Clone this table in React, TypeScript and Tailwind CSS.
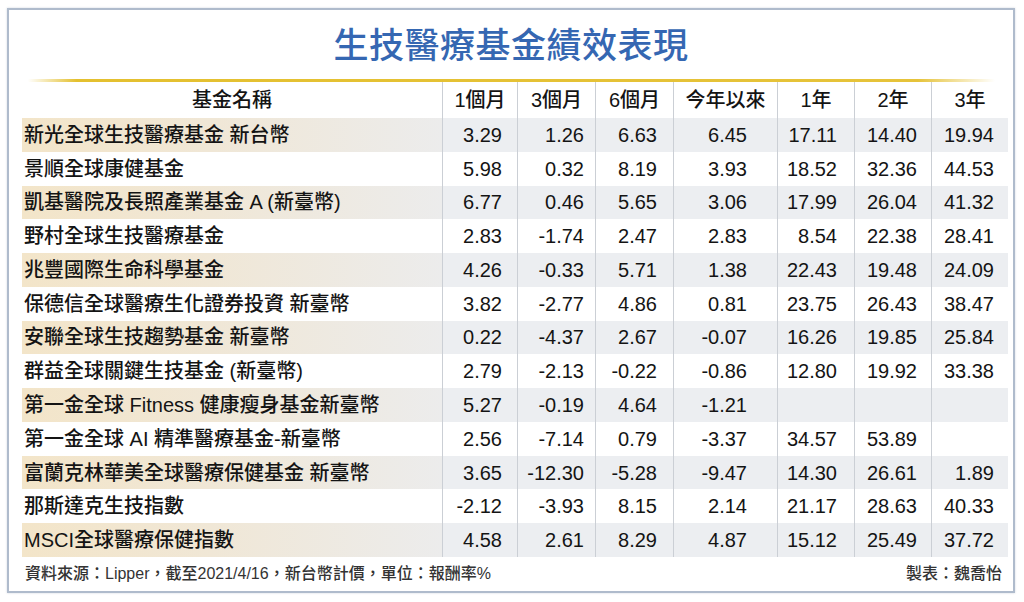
import React from "react";

const cols = [
  { h: "1個月", w: "w-[75px]", pr: "pr-[15px]" },
  { h: "3個月", w: "w-[78px]", pr: "pr-[11px]" },
  { h: "6個月", w: "w-[78px]", pr: "pr-[16px]" },
  { h: "今年以來", w: "w-[104px]", pr: "pr-[30px]" },
  { h: "1年", w: "w-[77px]", pr: "pr-[17px]" },
  { h: "2年", w: "w-[77px]", pr: "pr-[14px]" },
  { h: "3年", w: "w-[77px]", pr: "pr-[14px]" },
];

const rows: string[][] = [
  ["新光全球生技醫療基金 新台幣", "3.29", "1.26", "6.63", "6.45", "17.11", "14.40", "19.94"],
  ["景順全球康健基金", "5.98", "0.32", "8.19", "3.93", "18.52", "32.36", "44.53"],
  ["凱基醫院及長照產業基金 A (新臺幣)", "6.77", "0.46", "5.65", "3.06", "17.99", "26.04", "41.32"],
  ["野村全球生技醫療基金", "2.83", "-1.74", "2.47", "2.83", "8.54", "22.38", "28.41"],
  ["兆豐國際生命科學基金", "4.26", "-0.33", "5.71", "1.38", "22.43", "19.48", "24.09"],
  ["保德信全球醫療生化證券投資 新臺幣", "3.82", "-2.77", "4.86", "0.81", "23.75", "26.43", "38.47"],
  ["安聯全球生技趨勢基金 新臺幣", "0.22", "-4.37", "2.67", "-0.07", "16.26", "19.85", "25.84"],
  ["群益全球關鍵生技基金 (新臺幣)", "2.79", "-2.13", "-0.22", "-0.86", "12.80", "19.92", "33.38"],
  ["第一金全球 Fitness 健康瘦身基金新臺幣", "5.27", "-0.19", "4.64", "-1.21", "", "", ""],
  ["第一金全球 AI 精準醫療基金-新臺幣", "2.56", "-7.14", "0.79", "-3.37", "34.57", "53.89", ""],
  ["富蘭克林華美全球醫療保健基金 新臺幣", "3.65", "-12.30", "-5.28", "-9.47", "14.30", "26.61", "1.89"],
  ["那斯達克生技指數", "-2.12", "-3.93", "8.15", "2.14", "21.17", "28.63", "40.33"],
  ["MSCI全球醫療保健指數", "4.58", "2.61", "8.29", "4.87", "15.12", "25.49", "37.72"],
];

export default function App() {
  return (
    <div
      className="w-[1024px] h-[602px] bg-white pt-[8px] pl-[7px] text-[#141414] font-medium"
      style={{ fontFamily: '"Liberation Sans", "Noto Sans CJK TC", sans-serif' }}
    >
      <div className="w-[1008px] h-[585px] border-2 border-[#afbbcc] shadow-[0_0_2px_rgba(120,135,160,0.35)] flex flex-col bg-white">
        <div className="h-[69px] flex items-center justify-center">
          <div className="text-[35px] leading-none font-medium text-[#3567b2] tracking-[0.5px] pt-[2px]">
            生技醫療基金績效表現
          </div>
        </div>
        <div className="ml-[19px] w-[967px] h-[3px] bg-[linear-gradient(to_right,rgba(229,193,48,0),#e4c02f_5%,#e6c33a_92%,rgba(229,193,48,0))]" />
        <div className="ml-[13px] w-[986px] flex flex-col">
          <div className="flex h-[36px] items-center text-[20px]">
            <div className="w-[420px] h-full flex items-center justify-center">基金名稱</div>
            {cols.map((c) => (
              <div
                key={c.h}
                className={`${c.w} h-full flex items-center justify-center border-l border-[#cbcfd5]`}
              >
                {c.h}
              </div>
            ))}
          </div>
          {rows.map((r, i) => {
            const shaded = i % 2 === 0;
            return (
              <div key={i} className="flex h-[33.77px] text-[20px]">
                <div
                  className={`w-[420px] h-full flex items-center pl-[2px] whitespace-nowrap ${
                    shaded
                      ? "bg-[linear-gradient(to_right,#f3e5c9,#f0e7d6_45%,#ececec)]"
                      : ""
                  }`}
                >
                  {r[0]}
                </div>
                {cols.map((c, j) => (
                  <div
                    key={j}
                    className={`${c.w} ${c.pr} h-full flex items-center justify-end border-l border-[#cbcfd5] ${
                      shaded ? "bg-[#eceef1]" : ""
                    }`}
                  >
                    {r[j + 1]}
                  </div>
                ))}
              </div>
            );
          })}
          <div className="h-[34px] flex items-center justify-between pl-[3px] pr-[6px] text-[16px] text-[#333]">
            <span>資料來源：Lipper，截至2021/4/16，新台幣計價，單位：報酬率%</span>
            <span>製表：魏喬怡</span>
          </div>
        </div>
      </div>
    </div>
  );
}
